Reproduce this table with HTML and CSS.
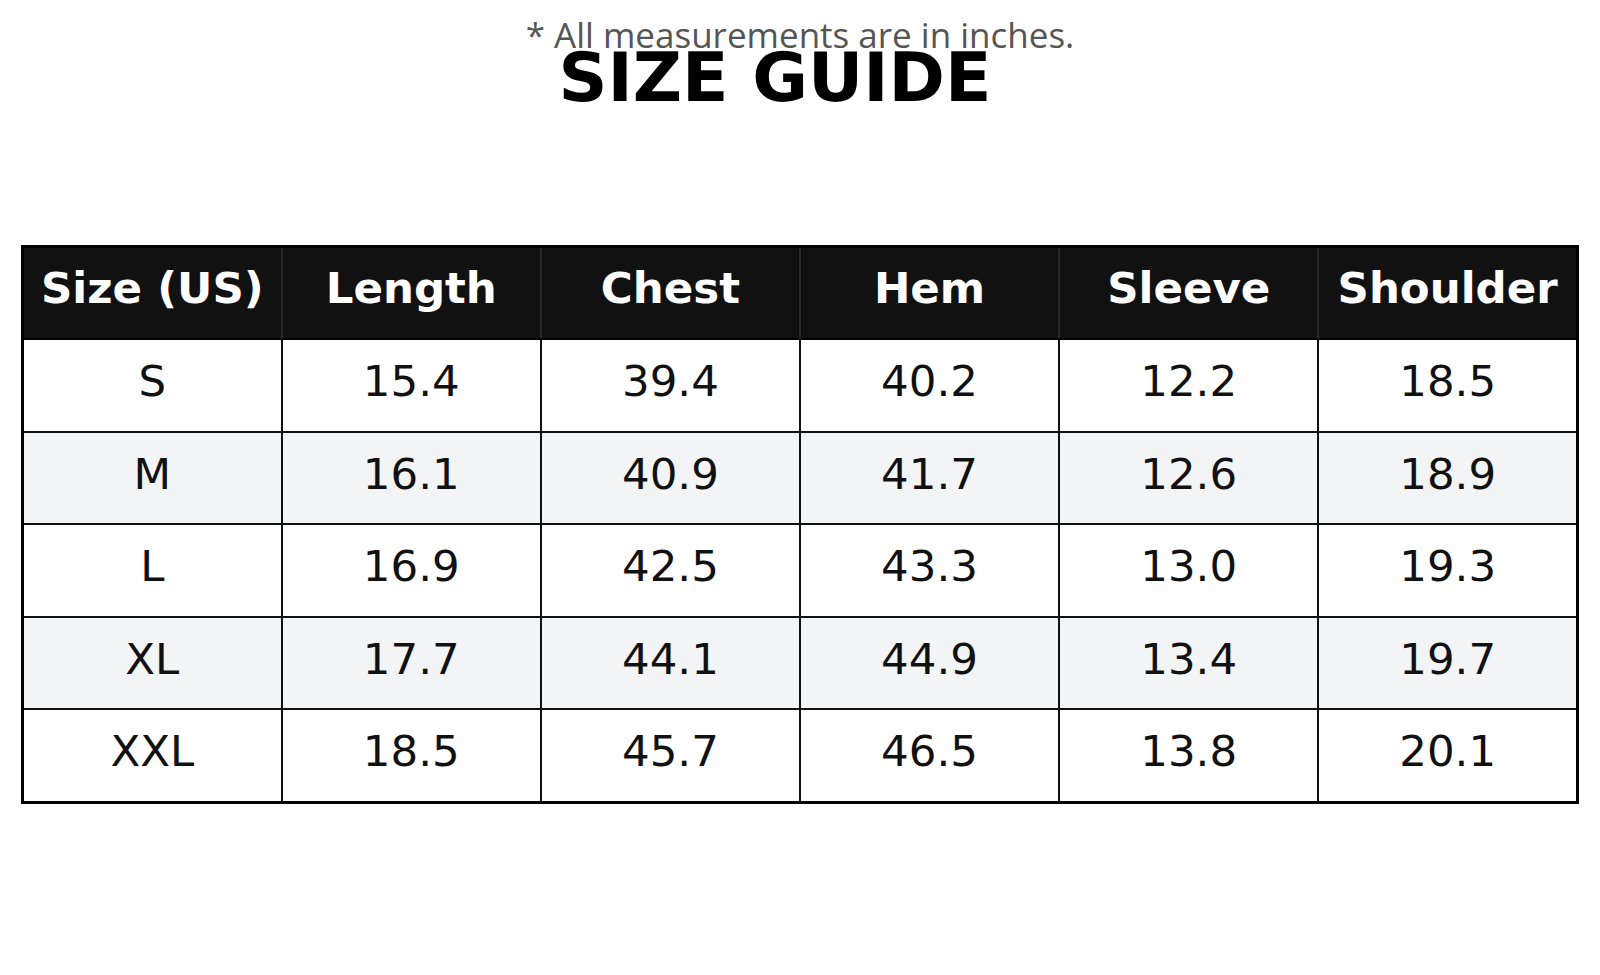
FILE: index.html
```html
<!DOCTYPE html>
<html lang="en">
<head>
<meta charset="utf-8">
<title>Size Guide</title>
<link rel="stylesheet" href="styles.css">
</head>
<body>
<div class="page">
  <div class="note">* All measurements are in inches.</div>
  <h1 class="title">SIZE GUIDE</h1>
  <table class="size-table">
    <thead>
      <tr>
        <th>Size (US)</th>
        <th>Length</th>
        <th>Chest</th>
        <th>Hem</th>
        <th>Sleeve</th>
        <th>Shoulder</th>
      </tr>
    </thead>
    <tbody>
      <tr><td>S</td><td>15.4</td><td>39.4</td><td>40.2</td><td>12.2</td><td>18.5</td></tr>
      <tr><td>M</td><td>16.1</td><td>40.9</td><td>41.7</td><td>12.6</td><td>18.9</td></tr>
      <tr><td>L</td><td>16.9</td><td>42.5</td><td>43.3</td><td>13.0</td><td>19.3</td></tr>
      <tr><td>XL</td><td>17.7</td><td>44.1</td><td>44.9</td><td>13.4</td><td>19.7</td></tr>
      <tr><td>XXL</td><td>18.5</td><td>45.7</td><td>46.5</td><td>13.8</td><td>20.1</td></tr>
    </tbody>
  </table>
</div>
</body>
</html>
```

FILE: styles.css
```css
html, body {
  margin: 0;
  padding: 0;
  background: #ffffff;
}

.page {
  width: 1600px;
  height: 975px;
  display: flex;
  flex-direction: column;
  align-items: center;
}

.note {
  margin-top: 18px;
  height: 34px;
  font-family: "Open Sans", "Liberation Sans", sans-serif;
  font-size: 35px;
  line-height: 34px;
  color: #555555;
  letter-spacing: 0;
}

.title {
  margin: -8px 0 0 0;
  padding-right: 50px;
  height: 68px;
  font-family: "DejaVu Sans", sans-serif;
  font-weight: bold;
  font-size: 68px;
  line-height: 68px;
  color: #000000;
}

.size-table {
  margin-top: 133px;
  width: 1558px;
  border-collapse: collapse;
  table-layout: fixed;
  border: 3px solid #000;
  font-family: "DejaVu Sans", sans-serif;
}

.size-table th {
  height: 80px;
  padding: 0 0 10px 0;
  background: #111111;
  color: #ffffff;
  font-weight: bold;
  font-size: 43.5px;
  text-align: center;
  vertical-align: middle;
  border: 2px solid #000;
  border-left-color: #2a2a2a;
  border-right-color: #2a2a2a;
}

.size-table th:first-child {
  border-left-color: #000;
}

.size-table th:last-child {
  border-right-color: #000;
}

.size-table td {
  height: 82.5px;
  padding: 0 0 8px 0;
  color: #111111;
  font-size: 43.5px;
  text-align: center;
  vertical-align: middle;
  border: 2px solid #111;
}

.size-table tbody tr:nth-child(even) td {
  background: #f3f4f6;
}
```
